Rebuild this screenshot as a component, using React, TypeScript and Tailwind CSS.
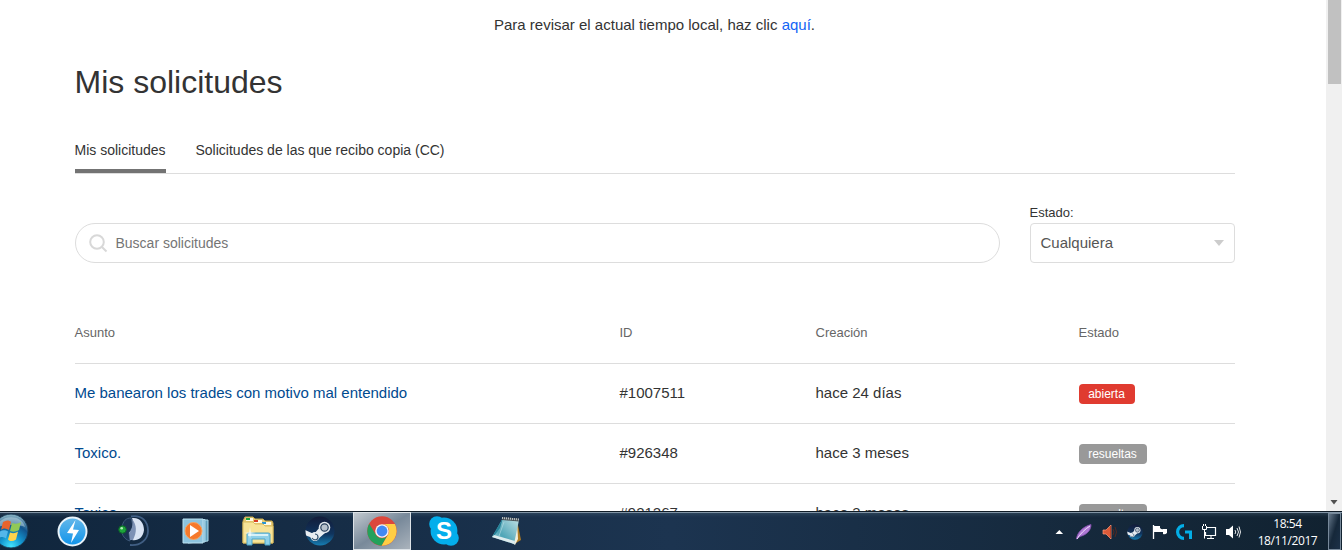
import type { ReactNode } from "react";
import clsx from "clsx";

const requests = [
  { subject: "Me banearon los trades con motivo mal entendido", id: "#1007511", created: "hace 24 días", status: "abierta" },
  { subject: "Toxico.", id: "#926348", created: "hace 3 meses", status: "resueltas" },
  { subject: "Toxico.", id: "#921267", created: "hace 3 meses", status: "resueltas" },
];

function Tabs() {
  return (
    <nav className="mt-[38px] flex h-[34px] gap-[30px] border-b border-[#ddd] text-sm leading-5">
      <a className="h-[33px] w-[91px] border-b-4 border-[#737373] whitespace-nowrap">Mis solicitudes</a>
      <a className="whitespace-nowrap">Solicitudes de las que recibo copia (CC)</a>
    </nav>
  );
}

function Filters() {
  return (
    <div className="mt-[29px] flex items-end gap-[30px]">
      <div className="flex h-10 w-[925px] items-center rounded-full border border-[#ddd] pl-[13px] text-sm text-[#757575]">
        <svg className="mr-[8px] size-[19px]" viewBox="0 0 19 19" fill="none" stroke="#d8d8d8" strokeWidth="2">
          <circle cx="8" cy="8" r="6.8" />
          <path d="M12.7 12.7 17.5 17.5" />
        </svg>
        <span>Buscar solicitudes</span>
      </div>
      <div className="w-[205px]">
        <div className="text-[13px] leading-5">Estado:</div>
        <div className="flex h-10 items-center justify-between rounded-[4px] border border-[#ddd] pr-[10px] pl-[10px] text-[15px] text-[#555]">
          <span>Cualquiera</span>
          <svg className="h-[6px] w-[10px]" viewBox="0 0 10 6">
            <path d="M0 0h10L5 6z" fill="#ccc" />
          </svg>
        </div>
      </div>
    </div>
  );
}

function RequestTable() {
  return (
    <div className="mt-[39px]">
      <div className="grid h-[62px] grid-cols-[545px_196px_263px_156px] items-center border-b border-[#ddd] text-[13px] text-[#666]">
        <span>Asunto</span>
        <span>ID</span>
        <span>Creación</span>
        <span>Estado</span>
      </div>
      {requests.map((r) => (
        <div key={r.id} className="grid h-[60px] grid-cols-[545px_196px_263px_156px] items-center border-b border-[#ddd] text-[15px]">
          <a className="text-[#004a8f]">{r.subject}</a>
          <span>{r.id}</span>
          <span>{r.created}</span>
          <span
            className={clsx(
              "h-5 justify-self-start rounded-[4px] text-center text-xs leading-5 text-white",
              r.status === "abierta" ? "w-14 bg-[#e03b30]" : "w-[68px] bg-[#999]"
            )}
          >
            {r.status}
          </span>
        </div>
      ))}
    </div>
  );
}

function ScrollBar() {
  return (
    <div className="flex w-4 shrink-0 flex-col items-center justify-between bg-[#f0f0f0]">
      <div className="ml-px h-[84px] w-[13px] bg-[#c1c1c1]" />
      <svg className="mb-[6px] h-[5px] w-[8px]" viewBox="0 0 8 5">
        <path d="M.5 0h7L4 4.5z" fill="#505050" />
      </svg>
    </div>
  );
}

function StartOrb() {
  return (
    <svg className="h-9 w-9" viewBox="0 0 36 36">
      <defs>
        <radialGradient id="orb" cx=".5" cy=".95" r=".9">
          <stop offset="0" stopColor="#43e4ff" />
          <stop offset=".35" stopColor="#1497d0" />
          <stop offset=".7" stopColor="#11548d" />
          <stop offset="1" stopColor="#7faabd" />
        </radialGradient>
      </defs>
      <circle cx="18" cy="18" r="17" fill="url(#orb)" stroke="#183852" />
      <path d="M4 14C7 1 29 1 32 14 25 11 12 12 4 14z" fill="#d1e3e7" opacity=".45" />
      <path d="M10 9c3-2 6-2 8 0l-2 8c-3-2-6-2-8 0z" fill="#e8632c" />
      <path d="M19 10c3 1 6 1 9-1l-2 8c-3 2-6 2-9 1z" fill="#91c957" />
      <path d="M7 18.500c3-2 6-1 8 0l-2 7c-3-2-5-2-8 0z" fill="#54b7ea" />
      <path d="M17 19.500c3 1 5 1 8-1l-2 8c-3 2-6 2-8 0z" fill="#ffd44c" />
    </svg>
  );
}

function LightningIcon() {
  return (
    <svg className="size-[31px]" viewBox="0 0 31 31">
      <defs>
        <linearGradient id="bolt" x2="0" y2="1">
          <stop stopColor="#65b8ea" />
          <stop offset="1" stopColor="#0f93ea" />
        </linearGradient>
      </defs>
      <circle cx="15.5" cy="15.5" r="14" fill="url(#bolt)" stroke="#eaf3f9" strokeWidth="2" />
      <path d="M18.500 4 10 17l6 .5L14 27l8-13-6-.5z" fill="#fff" />
    </svg>
  );
}

function TeamspeakIcon() {
  return (
    <svg className="size-8" viewBox="0 0 32 32">
      <path d="M13 1.500c11-2 17 5 17 14.500 0 9-8 15-18 14" fill="none" stroke="#405e83" strokeWidth="1.800" />
      <path d="M4 12C5 6 8 3 13 3l2 8-4 7 1 8c-4-1-7-4-8-8z" fill="#1b3252" stroke="#3c5778" />
      <path d="M14 3c8-1 12 5 12 12-1 8-6 11-12 10 1-2 1-4 0-6l-3-1c4-4 5-10 3-15z" fill="#d9e3f3" />
      <path d="M14 4c5 6 5 13 1 21h-3l-1-7c4-4 4-10 3-14z" fill="#7d91b5" />
      <circle cx="4.500" cy="14.500" r="3.800" fill="#1da43b" stroke="#0d642a" />
      <circle cx="3.700" cy="13.200" r="1.300" fill="#b2ecb5" />
    </svg>
  );
}

function MediaPlayerIcon() {
  return (
    <svg className="h-7 w-7" viewBox="0 0 28 28">
      <path d="M6 3h20v21L6 26z" fill="#5d9dbb" stroke="#b0dbec" />
      <path d="M4 2.500h19V25H4z" fill="#80b9d5" stroke="#b0dbec" />
      <path d="M1 2h20v24H1z" fill="#8dc4df" stroke="#bde2f0" />
      <circle cx="11.500" cy="14" r="8.500" fill="#f6792b" stroke="#f9a35e" />
      <path d="M8 8v12l9-6z" fill="#fff" />
    </svg>
  );
}

function ExplorerIcon() {
  return (
    <svg className="h-[30px] w-8" viewBox="0 0 32 30">
      <path d="M1 5 3 1h8l2 2h8l2 2h7l1 2v20H1z" fill="#e7ca74" stroke="#c7a94f" />
      <path d="M4 2h7v3H4zM12 4h8v3h-8zM20 6h9v3h-9z" fill="#fffbe5" />
      <path d="M4 2h4v2H4z" fill="#20a43c" />
      <path d="M12 4h4v2h-4z" fill="#d93b22" />
      <path d="M20 6h4v2h-4z" fill="#2695d7" />
      <path d="M1 6h10l2 2h8l2 2h8v17H1z" fill="#f7e398" stroke="#dabc60" />
      <path d="M5 29V18q0-1 2-1h19q2 0 2 1v11h-5v-6H10v6z" fill="#8ed0e9" stroke="#4ca4c7" />
      <path d="M6 19h20" stroke="#d7f1f8" strokeWidth="2" />
      <path d="m8 11 .8 5.200L14 17l-5.200.8L8 23l-.8-5.200L2 17l5.200-.8z" fill="#fff" opacity=".8" />
    </svg>
  );
}

function SteamIcon({ className }: { className: string }) {
  return (
    <svg className={className} viewBox="0 0 30 30">
      <defs>
        <linearGradient id="steam" x2="0" y2="1">
          <stop stopColor="#131c39" />
          <stop offset=".6" stopColor="#10345d" />
          <stop offset="1" stopColor="#167eb3" />
        </linearGradient>
        <clipPath id="steam-disc">
          <circle cx="15" cy="15" r="14.500" />
        </clipPath>
      </defs>
      <circle cx="15" cy="15" r="14.500" fill="url(#steam)" />
      <g clipPath="url(#steam-disc)">
        <path d="M-1 13.500 9 18l6-7 5 6-7 6-4 1-4-3-6-2z" fill="#e8edf1" />
      </g>
      <circle cx="10" cy="20.500" r="4.500" fill="#e8edf1" />
      <circle cx="19.500" cy="11.500" r="5.800" fill="#e3e8ed" />
      <circle cx="19.500" cy="11.500" r="3.700" fill="#b7c1cc" stroke="#2a405c" strokeWidth="1.200" />
      <path d="M7 22c2 3 6 2 6-1 0-2-2-3-3-3" fill="none" stroke="#31516d" strokeWidth="1.200" />
    </svg>
  );
}

function ChromeIcon() {
  return (
    <svg className="size-[30px]" viewBox="0 0 30 30">
      <circle cx="15" cy="15" r="14.700" fill="#dc473c" />
      <path d="M2.200 7.700A14.700 14.700 0 0 0 14.600 29.700L21.200 18.600A7 7 0 0 1 8.800 18.600z" fill="#23a15b" />
      <path d="M15 8.100h12.900A14.700 14.700 0 0 1 14.600 29.700l6.500-11.100A7 7 0 0 0 15 8.100z" fill="#ffce44" />
      <circle cx="15" cy="15" r="6.800" fill="#f6f6f3" />
      <circle cx="15" cy="15" r="5.400" fill="#4289f4" />
    </svg>
  );
}

function SkypeIcon() {
  return (
    <div className="relative grid size-[30px] place-items-center">
      <svg className="absolute size-[30px]" viewBox="0 0 30 30">
        <circle cx="15" cy="15" r="13.400" fill="#04aeeb" />
        <circle cx="8" cy="8" r="7.800" fill="#04aeeb" />
        <circle cx="22" cy="22" r="7.800" fill="#04aeeb" />
      </svg>
      <span className="relative font-['Liberation_Sans',Arial,sans-serif] text-[24px] leading-none font-bold text-white">S</span>
    </div>
  );
}

function NotepadIcon() {
  return (
    <svg className="h-[30px] w-[31px]" viewBox="0 0 31 30">
      <defs>
        <linearGradient id="paper" x1="0" y1="1" x2="1" y2="0">
          <stop stopColor="#b9dbe1" />
          <stop offset=".35" stopColor="#4fa5b7" />
          <stop offset=".7" stopColor="#8ec6d1" />
          <stop offset="1" stopColor="#c4e2e6" />
        </linearGradient>
      </defs>
      <path d="m26 4 4 20-5 3-3-2z" fill="#ad7b24" />
      <path d="m26 4 1 19-3 6-4-3z" fill="#f1efdf" />
      <path d="M12 2 28 4 23 28 1 21z" fill="url(#paper)" />
      <path d="m12 2-3 10-6 8-2 1z" fill="#247f96" />
      <path d="m1 21 22 7 1-3L3 19z" fill="#ddebed" />
      <path d="M11 2.500 28 4" stroke="#4c5358" strokeWidth="3" />
      <path d="M11 2 28 3.500" stroke="#bcc5c8" strokeWidth="2" strokeDasharray="1 1" />
      <path d="M13 6 8 20" stroke="#cbe8ed" opacity=".5" />
    </svg>
  );
}

function TrayIcon({ className, children }: { className?: string; children: ReactNode }) {
  return (
    <svg className={clsx("size-4 shrink-0", className)} viewBox="0 0 16 16">
      {children}
    </svg>
  );
}

function Tray() {
  return (
    <div className="flex items-center gap-[9px] pt-[2px]">
      <TrayIcon className="-ml-px">
        <path d="m4.500 10 3.800-4 3.800 4z" fill="#fff" />
      </TrayIcon>
      <TrayIcon>
        <path d="M.5 15C1 9 6 3 15 .5c0 6-4 10-11 12z" fill="#ad79d3" stroke="#8751b0" strokeWidth=".8" />
        <path d="M1 15C4 10 9 5 14 2" fill="none" stroke="#f2ddff" />
      </TrayIcon>
      <TrayIcon className="ml-px">
        <path d="M1 6h3l5-5v14l-5-5H1z" fill="#dc5a38" stroke="#ff9a78" strokeWidth=".7" />
        <path d="M8.500 2v12" stroke="#b8432a" />
        <path d="M11 5q2 3 0 6M13 3q3 5 0 10" fill="none" stroke="#552820" />
      </TrayIcon>
      <SteamIcon className="h-4 w-4" />
      <TrayIcon>
        <path d="M1.500 1v14" stroke="#fff" strokeWidth="1.300" />
        <path d="M2 2h6v6H2zM8 4q2 2 3 1h4v4q-2 2-4 1V8H8z" fill="#fff" />
      </TrayIcon>
      <TrayIcon className="-ml-px">
        <path d="M8 0v3.200a4.800 4.800 0 0 0 0 9.600V16A8 8 0 0 1 8 0z" fill="#03aee7" />
        <path d="M9 6.400h7V15h-3V9.500H9z" fill="#03aee7" />
      </TrayIcon>
      <TrayIcon>
        <path d="M6 3.500h8.500v8H4.500V8" fill="#142c40" stroke="#fff" strokeWidth="1.200" />
        <path d="M1.500 2v3.500h4V2M3.500 5.500v9M10 11v3M6 14.500h7M2.500 0v2M4.500 0v2" fill="none" stroke="#fff" />
      </TrayIcon>
      <TrayIcon className="-ml-px">
        <path d="M1 5h3l4-3.500v13L4 11H1z" fill="#fff" />
        <path d="M10 6q1.500 2 0 4M12 4q3 4 0 8M14 2.500q3 5.500 0 11" fill="none" stroke="#fff" strokeWidth=".9" />
      </TrayIcon>
    </div>
  );
}

function Taskbar() {
  const apps = [
    <LightningIcon />,
    <TeamspeakIcon />,
    <MediaPlayerIcon />,
    <ExplorerIcon />,
    <SteamIcon className="size-[30px]" />,
    <ChromeIcon />,
    <SkypeIcon />,
    <NotepadIcon />,
  ];

  return (
    <footer className="flex h-[39px] shrink-0 overflow-hidden border-t border-[#101c27] bg-linear-to-r from-[#10263d] via-[#1c3450] to-[#112230] shadow-[inset_0_1px_0_#8194a5,inset_0_5px_4px_-3px_#526b8080]">
      <div className="flex w-[41px] items-center">
        <div className="-ml-[7px] shrink-0">
          <StartOrb />
        </div>
      </div>
      {apps.map((icon, i) => (
        <div key={i} className="flex w-[62px] justify-center">
          <div
            className={clsx(
              "flex w-[58px] items-center justify-center",
              i === 5 && "border border-[#dce2e7] bg-linear-to-br from-[#c2c9cf] via-[#78899a] to-[#aab3bc]"
            )}
          >
            {icon}
          </div>
        </div>
      ))}
      <div className="ml-auto flex">
        <Tray />
        <div className="ml-[9px] w-[75px] pt-[3px] text-center font-['Open_Sans','Noto_Sans',sans-serif] text-xs leading-[17px] tracking-[-0.4px] text-white">
          <div>18:54</div>
          <div>18/11/2017</div>
        </div>
        <div className="mt-px mr-px ml-[3px] w-[13px] border border-[#77899a] bg-linear-to-br from-[#657789] via-[#16283a] to-[#1c3148]" />
      </div>
    </footer>
  );
}

export default function App() {
  return (
    <div className="flex h-[550px] w-[1342px] flex-col overflow-hidden bg-white font-['Liberation_Sans',Arial,sans-serif] text-[#333]">
      <div className="flex h-[511px] shrink-0 overflow-hidden">
        <main className="flex-1 overflow-hidden pr-[91.5px] pl-[74.5px]">
          <p className="mt-[14px] text-center text-[15px] leading-[22px]">
            Para revisar el actual tiempo local, haz clic <a className="text-[#1264f5]">aquí</a>.
          </p>
          <h1 className="mt-[26px] text-[32px] leading-10">Mis solicitudes</h1>
          <Tabs />
          <Filters />
          <RequestTable />
        </main>
        <ScrollBar />
      </div>
      <Taskbar />
    </div>
  );
}
